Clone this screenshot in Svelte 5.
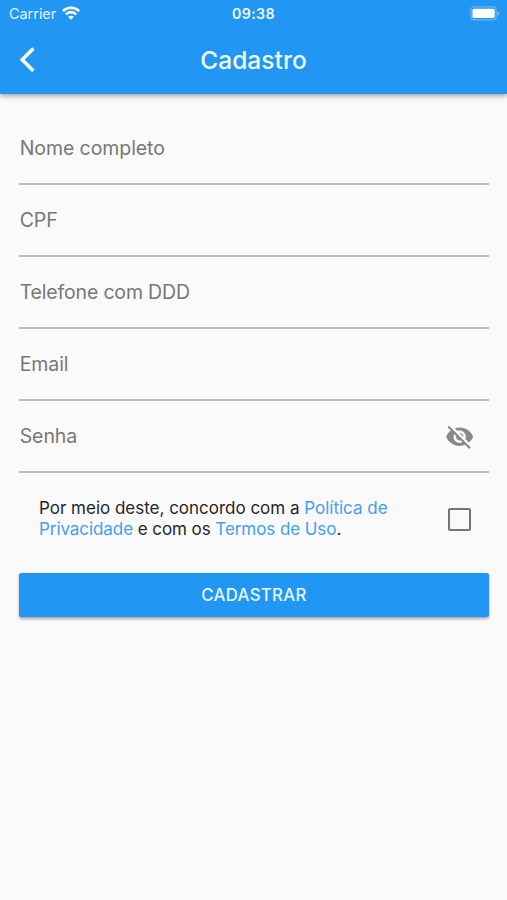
<script>
  const fields = [
    { label: 'Nome completo', cls: 'nome' },
    { label: 'CPF', cls: 'cpf' },
    { label: 'Telefone com DDD', cls: 'telefone' },
    { label: 'Email', cls: 'email' },
    { label: 'Senha', cls: 'senha', secret: true }
  ];
</script>

<div class="screen">
  <header>
    <div class="status">
      <div class="carrier">
        <span>Carrier</span>
        <svg class="wifi" width="18" height="14" viewBox="0 0 18 14" fill="none" stroke="#fff" stroke-width="2.6">
          <path d="M.9 5.1C5.4.6 12.6.6 17.1 5.1" />
          <path d="M3.8 8.3c2.9-2.9 7.5-2.9 10.4 0" />
          <path d="M9 13.8l-2.9-3c1.6-1.5 4.2-1.5 5.8 0z" fill="#fff" stroke="none" />
        </svg>
      </div>
      <time>09:38</time>
      <svg class="battery" width="30" height="15" viewBox="0 0 30 15">
        <rect x=".9" y=".9" width="25.2" height="13" rx="3.4" fill="none" stroke="#fff" stroke-opacity=".32" stroke-width="1.2" />
        <rect x="2.5" y="2.7" width="22.2" height="9.4" rx="1.6" fill="#fff" />
        <path d="M27.4 5.2c2.3.7 2.3 3.8 0 4.5z" fill="#fff" fill-opacity=".4" />
      </svg>
    </div>
    <div class="bar">
      <button class="back" aria-label="Voltar">
        <svg width="29.4" height="29.4" viewBox="0 0 24 24" fill="#fff" stroke="#fff" stroke-width=".5" stroke-linejoin="round">
          <path d="M11.67 3.87L9.9 2.1 0 12l9.9 9.9 1.77-1.77L3.54 12z" />
        </svg>
      </button>
      <h1>Cadastro</h1>
    </div>
  </header>

  <main>
    {#each fields as f}
      <div class="field">
        <span class={f.cls}>{f.label}</span>
        {#if f.secret}
          <svg class="eye" width="29.4" height="29.4" viewBox="0 0 24 24" fill="#898989">
            <path d="M12 7c2.76 0 5 2.24 5 5 0 .65-.13 1.26-.36 1.83l2.92 2.92c1.51-1.26 2.7-2.89 3.43-4.75-1.73-4.39-6-7.5-11-7.5-1.4 0-2.74.25-3.98.7l2.16 2.16C10.74 7.13 11.35 7 12 7zM2 4.27l2.28 2.28.46.46C3.08 8.3 1.78 10.02 1 12c1.73 4.39 6 7.5 11 7.5 1.55 0 3.03-.3 4.38-.84l.42.42L19.73 22 21 20.73 3.27 3 2 4.27zM7.53 9.8l1.55 1.55c-.05.21-.08.43-.08.65 0 1.66 1.34 3 3 3 .22 0 .44-.03.65-.08l1.55 1.55c-.67.33-1.41.53-2.2.53-2.76 0-5-2.24-5-5 0-.79.2-1.53.53-2.2zm4.31-.78l3.15 3.15.02-.16c0-1.66-1.34-3-3-3l-.17.01z" />
          </svg>
        {/if}
      </div>
    {/each}

    <div class="consent">
      <p>
        <span class="l1">Por meio deste, concordo com a <b>Política de</b></span><br />
        <span class="l2"><b>Privacidade</b> e com os <b>Termos de Uso</b>.</span>
      </p>
      <span class="box" role="checkbox" aria-checked="false" aria-label="Concordo" tabindex="0"></span>
    </div>

    <button class="submit">CADASTRAR</button>
  </main>
</div>

<style>
  :global(body) {
    margin: 0;
    background: #fafafa;
  }
  .screen {
    height: 900px;
    overflow: hidden;
    background: #fafafa;
    font-family: Inter, "Liberation Sans", sans-serif;
  }
  button {
    border: 0;
    padding: 0;
    font-family: inherit;
    color: #fff;
  }
  svg {
    display: block;
  }
  header {
    height: 94px;
    background: #2196f3;
    color: #fff;
    box-shadow: 0 2px 5px rgba(0, 0, 0, 0.36);
  }
  .status {
    height: 26px;
    padding: 0 7px 0 9px;
    display: grid;
    grid-template-columns: 1fr auto 1fr;
    align-items: center;
    box-sizing: border-box;
  }
  .carrier {
    display: flex;
    align-items: center;
    gap: 6px;
    font-size: 14.4px;
    line-height: 18px;
    color: #e3f3ff;
    padding-top: 2px;
  }
  .wifi {
    margin-top: -3px;
  }
  time {
    font-size: 14.2px;
    font-weight: 600;
    line-height: 18px;
    padding-top: 2px;
    letter-spacing: 0.4px;
    margin-right: 2px;
    color: #effaff;
  }
  .battery {
    justify-self: end;
  }
  .bar {
    height: 68px;
    display: grid;
    grid-template-columns: 60px 1fr 60px;
    align-items: center;
  }
  .back {
    background: none;
    padding-left: 20px;
  }
  h1 {
    margin: 0;
    text-align: center;
    font-size: 24.5px;
    font-weight: 500;
    line-height: 30px;
    letter-spacing: 0.05px;
    color: #f0fbff;
  }
  main {
    padding: 19px 18px 0 19px;
  }
  .field {
    height: 72px;
    box-sizing: border-box;
    border-bottom: 2px solid #bebebe;
    padding: 0 15px 0 0.7px;
    display: flex;
    justify-content: space-between;
    align-items: center;
    font-size: 19.5px;
    line-height: 24px;
    letter-spacing: -0.08px;
    color: #777;
  }
  .telefone {
    letter-spacing: -0.17px;
  }
  .eye {
    margin-top: 2px;
  }
  .consent {
    height: 92px;
    padding: 0 18.5px 0 20px;
    display: flex;
    justify-content: space-between;
    align-items: center;
  }
  p {
    margin: 0;
    font-size: 17px;
    line-height: 21px;
    letter-spacing: -0.01px;
    color: #262626;
    white-space: nowrap;
  }
  .l2 {
    letter-spacing: -0.07px;
  }
  b {
    font-weight: 400;
    color: #42a0f0;
  }
  .box {
    width: 23px;
    height: 23px;
    box-sizing: border-box;
    border: 2.5px solid #757575;
    border-radius: 2px;
  }
  .submit {
    width: 100%;
    height: 44px;
    margin-top: 8px;
    display: block;
    background: #2196f3;
    border-radius: 2.5px;
    box-shadow: 0 1.5px 3px rgba(0, 0, 0, 0.32);
    font-size: 16.8px;
    font-weight: 500;
    letter-spacing: 0.3px;
    color: #e8f8ff;
  }
</style>
